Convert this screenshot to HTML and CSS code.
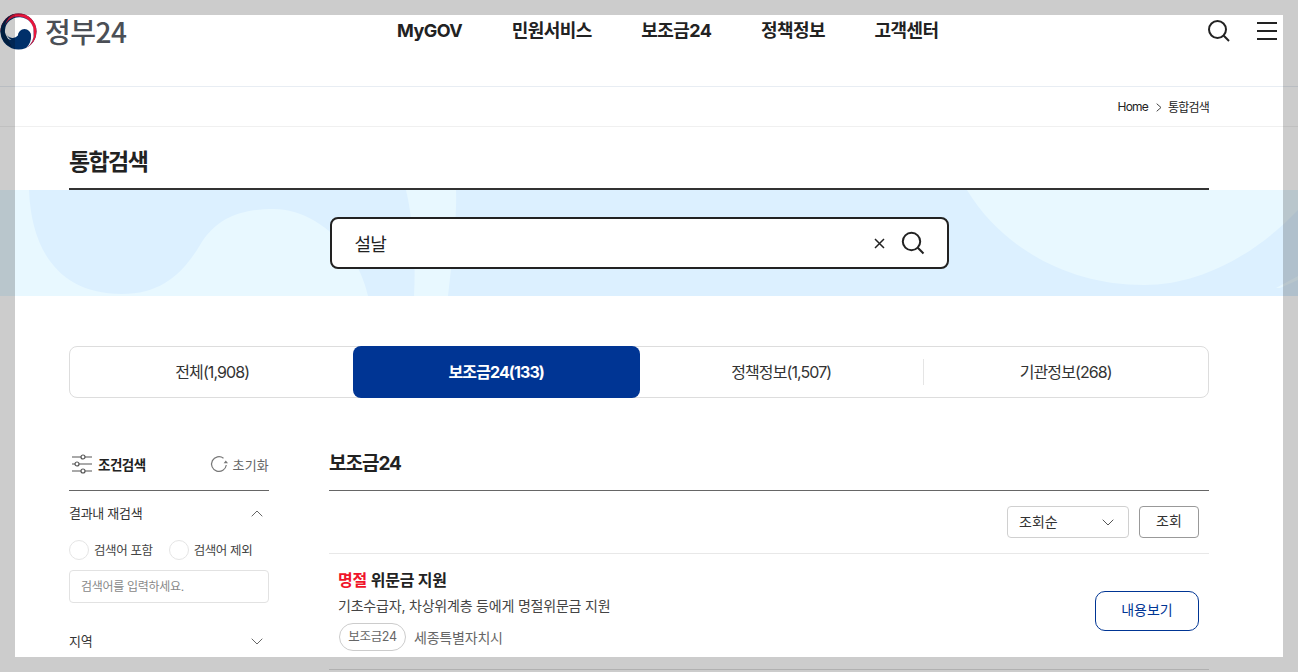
FILE: index.html
```html
<!DOCTYPE html>
<html lang="ko">
<head>
<meta charset="utf-8">
<title>정부24 통합검색</title>
<link rel="stylesheet" href="styles.css">
</head>
<body>
<header class="header">
  <a class="logo">
    <svg class="logo-mark" width="38" height="37" viewBox="0 0 38 37">
      <circle cx="18.5" cy="18.5" r="18" fill="#00306a"/>
      <path d="M0.5 18.5A18 18 0 0 1 36.5 18.5A18 18 0 0 1 26 35A14 15 0 0 0 33.5 19A15 15 0 0 0 5 12Z" fill="#e8163c"/>
      <path d="M5 17A14 13.5 0 0 1 33.5 19A14 15 0 0 1 26.5 34.5A15 15 0 0 0 31 22.5A6.5 6.5 0 0 0 18 22.5A7 7 0 0 1 5 17Z" fill="#fff"/>
      <path d="M6 20A7 7 0 0 0 18 22.5A6.6 6.6 0 0 1 31 23A14 14 0 0 1 6 20Z" fill="#00306a"/>
      <path d="M0.5 18.5A18 18 0 0 1 15 1A15 15 0 0 0 5 13C4 17 5 21 7 24L12 34.5A18 18 0 0 1 0.5 18.5Z" fill="#00264f"/>
    </svg>
    <span class="logo-text">정부24</span>
  </a>
  <nav class="nav">
    <a>MyGOV</a><a>민원서비스</a><a>보조금24</a><a>정책정보</a><a>고객센터</a>
  </nav>
  <div class="util">
    <svg width="24" height="24" viewBox="0 0 24 24" fill="none" stroke="#222" stroke-width="2"><circle cx="10.5" cy="10.5" r="8.5"/><path d="M16.8 16.8L22 22"/></svg>
    <span class="burger"><i></i><i></i><i></i></span>
  </div>
</header>

<div class="crumbs">
  <div class="wrap crumb-row">
    <span>Home</span>
    <svg class="crumb-sep" width="6" height="9" viewBox="0 0 6 9" fill="none" stroke="#444"><path d="M.7.7L5 4.5.7 8.3"/></svg>
    <span>통합검색</span>
  </div>
</div>

<div class="wrap">
  <h1 class="page-title">통합검색</h1>
</div>

<section class="band">
  <svg class="band-art" width="1298" height="106" viewBox="0 0 1298 106">
    <path d="M0 0H29C31 55 55 104 122 104C160 104 182 85 200 55C218 25 245 19 274 19C310 19 355 50 368 106H0Z" fill="#e8f8ff"/>
    <path d="M406 0C413 30 416 70 414 106H448C452 70 457 30 456 0Z" fill="#e8f8ff"/>
    <path d="M967 0C1000 55 1065 95 1144 95C1200 95 1255 65 1298 20V0Z" fill="#e8f8ff"/>
    <path d="M1276 98L1298 86V90L1280 98Z" fill="#e8f8ff"/>
  </svg>
  <form class="search">
    <span class="search-text">설날</span>
    <svg class="search-x" width="11" height="11" viewBox="0 0 11 11" stroke="#222" stroke-width="1.5"><path d="M1 1L10 10M10 1L1 10"/></svg>
    <svg width="24" height="24" viewBox="0 0 24 24" fill="none" stroke="#222" stroke-width="2"><circle cx="10.5" cy="10.5" r="8.7"/><path d="M16.8 16.8L22.5 22.5"/></svg>
  </form>
</section>

<div class="wrap">
  <div class="tabs">
    <a class="tab">전체(1,908)</a>
    <a class="tab tab-on">보조금24(133)</a>
    <a class="tab tab-rule">정책정보(1,507)</a>
    <a class="tab">기관정보(268)</a>
  </div>

  <div class="columns">
    <aside class="side">
      <div class="side-head">
        <svg width="20" height="20" viewBox="0 0 20 20" fill="none" stroke="#555" stroke-width="1.2"><path d="M0 3H9M13 3H20M0 10H3M7 10H20M0 17H9M13 17H20"/><circle cx="11" cy="3" r="2"/><circle cx="5" cy="10" r="2"/><circle cx="11" cy="17" r="2"/></svg>
        <strong>조건검색</strong>
        <span class="reset">
          <svg width="18" height="18" viewBox="0 0 18 18" fill="none" stroke="#777" stroke-width="1.2"><path d="M13.5 3.2A7.4 7.4 0 1 0 16.3 10"/><path d="M13.6 8.2H18L15.8 5.4Z" fill="#777" stroke="none"/></svg>
          초기화
        </span>
      </div>
      <div class="side-row">
        <span>결과내 재검색</span>
        <svg width="12" height="7" viewBox="0 0 12 7" fill="none" stroke="#666"><path d="M.7 6.3L6 1l5.3 5.3"/></svg>
      </div>
      <div class="radios">
        <label class="radio"><i></i><span class="radio-text">검색어 포함</span></label>
        <label class="radio"><i></i><span class="radio-text">검색어 제외</span></label>
      </div>
      <div class="side-input">검색어를 입력하세요.</div>
      <div class="side-row side-row-next">
        <span>지역</span>
        <svg width="12" height="7" viewBox="0 0 12 7" fill="none" stroke="#666"><path d="M.7.7L6 6l5.3-5.3"/></svg>
      </div>
    </aside>

    <main class="main">
      <h2 class="main-title">보조금24</h2>
      <div class="sort">
        <div class="select">
          <span>조회순</span>
          <svg width="12" height="7" viewBox="0 0 12 7" fill="none" stroke="#555"><path d="M.7.7L6 6l5.3-5.3"/></svg>
        </div>
        <a class="sort-btn">조회</a>
      </div>
      <article class="result">
        <div class="result-body">
          <h3 class="result-title"><em>명절</em> 위문금 지원</h3>
          <p class="result-desc">기초수급자, 차상위계층 등에게 명절위문금 지원</p>
          <div class="result-meta"><span class="tag">보조금24</span><span>세종특별자치시</span></div>
        </div>
        <a class="view-btn">내용보기</a>
      </article>
    </main>
  </div>
</div>

<div class="dim"></div>
</body>
</html>
```
FILE: styles.css
```css
* { box-sizing: border-box; }
html, body { margin: 0; height: 672px; overflow: hidden; }
body {
  background: #fff;
  color: #222;
  font-family: "Inter", "Noto Sans CJK KR", sans-serif;
}
a { color: inherit; text-decoration: none; }
h1, h2, h3, p { margin: 0; }

.wrap { width: 1140px; margin-left: 69px; }

.header {
  display: flex;
  align-items: flex-start;
  width: 100%;
  height: 87px;
  border-bottom: 1px solid #e8edf3;
  padding: 13px 21px 0 0;
}
.logo { display: flex; align-items: center; gap: 7px; width: 397px; height: 36px; }
.logo-mark { flex: none; }
.logo-text {
  font-family: "Noto Sans CJK KR", sans-serif;
  font-size: 28px;
  font-weight: 500;
  letter-spacing: -.5px;
  color: #4b4f56;
  line-height: 34px;
}
.nav {
  display: flex;
  gap: 49.5px;
  font-size: 18px;
  font-weight: 700;
  letter-spacing: -.55px;
  line-height: 35px;
  height: 36px;
}
.util { display: flex; align-items: center; gap: 26px; margin-left: auto; height: 36px; }
.burger { display: flex; flex-direction: column; justify-content: space-between; width: 20px; height: 18px; }
.burger i { height: 2px; background: #222; }

.crumbs { height: 40px; border-bottom: 1px solid #f0f0f0; }
.crumb-row {
  display: flex;
  justify-content: flex-end;
  align-items: center;
  gap: 6px;
  height: 39px;
  font-size: 12px;
  letter-spacing: -.8px;
}
.crumb-sep { margin-left: 2px; margin-top: 2px; }

.page-title {
  height: 63px;
  border-bottom: 2px solid #333;
  font-size: 23px;
  font-weight: 700;
  letter-spacing: -1.6px;
  line-height: 71px;
}

.band {
  position: relative;
  display: flex;
  align-items: center;
  justify-content: center;
  width: 1298px;
  height: 106px;
  padding-right: 20px;
  background: #dcf0ff;
}
.band-art { position: absolute; left: 0; top: 0; }
.search {
  position: relative;
  display: flex;
  align-items: center;
  width: 619px;
  height: 52px;
  padding: 0 22px 0 23px;
  background: #fff;
  border: 2px solid #222;
  border-radius: 8px;
}
.search-text { flex: 1; font-size: 18px; letter-spacing: -.8px; }
.search-x { margin-right: 16px; }

.tabs {
  display: grid;
  grid-template-columns: repeat(4, 1fr);
  height: 52px;
  margin-top: 50px;
  border: 1px solid #ddd;
  border-radius: 8px;
}
.tab {
  display: flex;
  align-items: center;
  justify-content: center;
  padding-bottom: 2px;
  font-size: 16px;
  letter-spacing: -.9px;
  color: #333;
}
.tab-on {
  margin: -1px -1px -1px -2px;
  background: #003594;
  border-radius: 8px;
  color: #fff;
  font-weight: 700;
}
.tab-rule { position: relative; }
.tab-rule::after {
  content: "";
  position: absolute;
  right: 0;
  top: 12px;
  bottom: 12px;
  width: 1px;
  background: #e5e5e5;
}

.columns { display: flex; gap: 60px; margin-top: 48px; }

.side { width: 200px; flex: none; }
.side-head {
  display: flex;
  align-items: center;
  gap: 6px;
  height: 45px;
  padding: 0 0 8px 3px;
  border-bottom: 1px solid #666;
  font-size: 13.5px;
  letter-spacing: -.5px;
}
.reset { display: flex; align-items: center; gap: 5px; margin-left: auto; color: #666; font-size: 13px; letter-spacing: .2px; font-weight: 400; }
.side-row {
  display: flex;
  align-items: center;
  justify-content: space-between;
  height: 44px;
  padding: 0 6px 2px 0;
  font-size: 13px;
  letter-spacing: -.3px;
  color: #333;
}
.side-row svg { margin-top: 2px; }
.radios { display: flex; gap: 16px; height: 20px; margin-top: 5px; }
.radio { display: flex; align-items: center; gap: 5px; font-size: 12.5px; letter-spacing: -.4px; color: #444; }
.radio-text { margin-top: -2px; }
.radio i { width: 20px; height: 20px; border: 1px solid #e5e5e5; border-radius: 50%; }
.side-input {
  height: 33px;
  margin-top: 10px;
  padding-left: 11px;
  border: 1px solid #e2e2e2;
  border-radius: 4px;
  font-size: 12px;
  letter-spacing: -.3px;
  line-height: 31px;
  color: #888;
}
.side-row-next { margin-top: 16px; }

.main { width: 880px; flex: none; }
.main-title {
  height: 45px;
  border-bottom: 1px solid #666;
  font-size: 19px;
  font-weight: 700;
  letter-spacing: -1px;
  line-height: 35px;
}
.sort {
  display: flex;
  justify-content: flex-end;
  gap: 10px;
  height: 63px;
  padding: 15px 10px 0 0;
  border-bottom: 1px solid #e8e8e8;
  font-size: 14px;
}
.select {
  display: flex;
  align-items: center;
  justify-content: space-between;
  width: 122px;
  height: 32px;
  padding: 0 14px 2px 11px;
  border: 1px solid #d0d0d0;
  border-radius: 4px;
  color: #333;
}
.select svg { margin-top: 2px; }
.sort-btn {
  width: 60px;
  height: 32px;
  border: 1px solid #999;
  border-radius: 4px;
  line-height: 28px;
  text-align: center;
  color: #333;
}
.result {
  display: flex;
  align-items: center;
  justify-content: space-between;
  height: 116px;
  padding: 0 10px 0 9px;
  border-bottom: 1px solid #ddd;
}
.result-body { padding-bottom: 4px; }
.result-title { font-size: 16px; font-weight: 700; letter-spacing: -.2px; line-height: 24px; }
.result-title em { font-style: normal; color: #f0142a; }
.result-desc { margin-top: 4px; font-size: 14px; letter-spacing: -.2px; line-height: 20px; color: #444; }
.result-meta { display: flex; align-items: center; gap: 8px; margin-top: 7px; font-size: 14px; letter-spacing: -.2px; color: #666; }
.tag {
  width: 67px;
  height: 28px;
  margin-left: 1px;
  border: 1px solid #ccc;
  border-radius: 14px;
  font-size: 12.5px;
  letter-spacing: -.3px;
  line-height: 25px;
  text-align: center;
}
.view-btn {
  width: 104px;
  height: 40px;
  margin-bottom: 2px;
  border: 1px solid #003594;
  border-radius: 10px;
  font-size: 14px;
  line-height: 36px;
  text-align: center;
  color: #003594;
}

.dim {
  position: fixed;
  left: 15px;
  top: 15px;
  width: 1268px;
  height: 642px;
  box-shadow: 0 0 0 2000px rgba(0, 0, 0, .2);
  pointer-events: none;
}
```
